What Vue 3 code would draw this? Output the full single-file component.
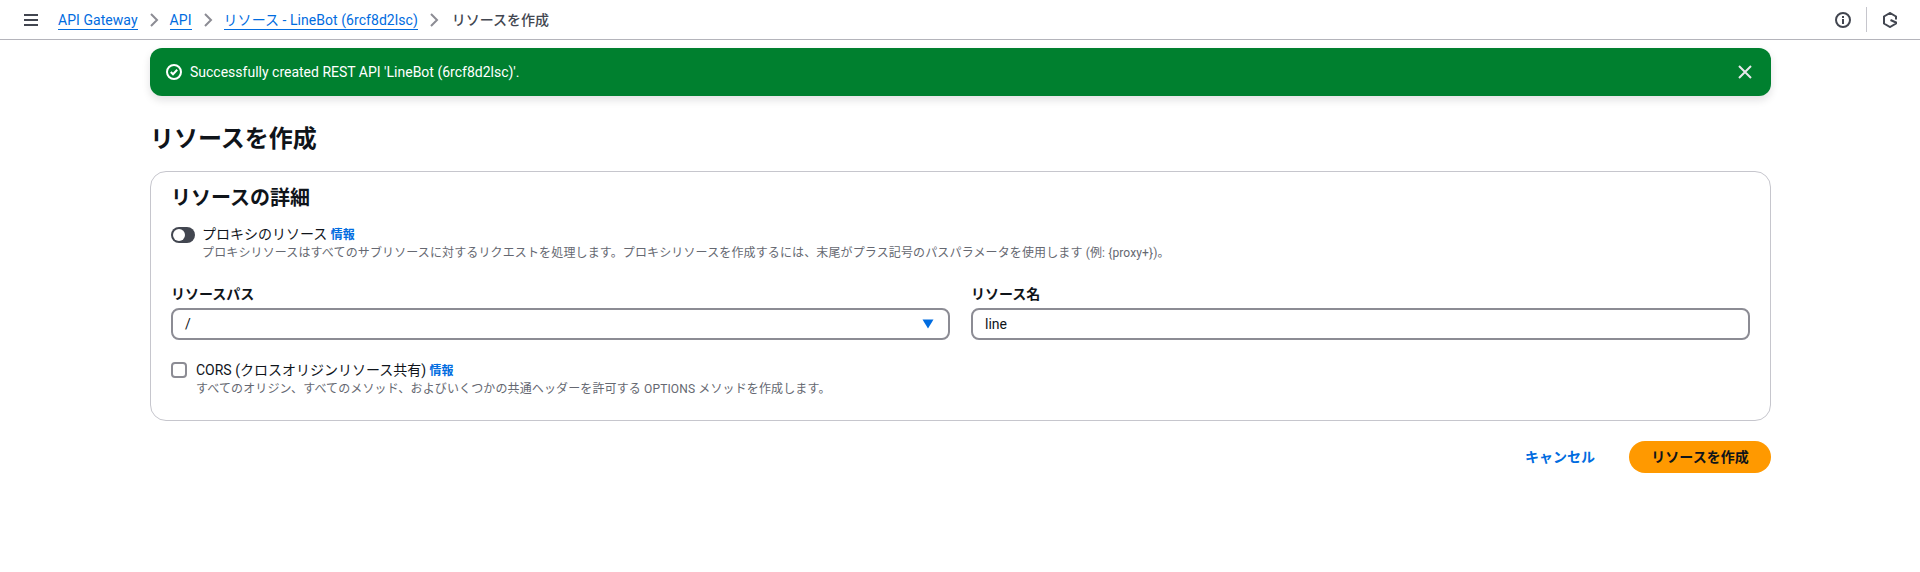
<script setup>
const crumbs = [
  { text: 'API Gateway' },
  { text: 'API' },
  { text: 'リソース - LineBot (6rcf8d2lsc)' },
]
</script>

<template>
  <div class="page">
    <header class="nav">
      <svg class="burger" width="16" height="16" viewBox="0 0 16 16" fill="none" stroke="#424650" stroke-width="2"><path d="M1 3h14M1 8h14M1 13h14" /></svg>
      <nav class="crumbs">
        <template v-for="c in crumbs" :key="c.text">
          <a class="crumb">{{ c.text }}</a>
          <svg class="chev" width="16" height="16" viewBox="0 0 16 16" fill="none" stroke="#8c8c94" stroke-width="2"><path d="M5 2l6 6-6 6" /></svg>
        </template>
        <span class="current">リソースを作成</span>
      </nav>
      <div class="nav-tools">
        <svg width="16" height="16" viewBox="0 0 16 16" fill="none" stroke="#424650" stroke-width="2"><circle cx="8" cy="8" r="7" /><path d="M8 7v5M8 4v2" /></svg>
        <span class="nav-div"></span>
        <svg width="16" height="16" viewBox="0 0 16 16" fill="none" stroke="#424650" stroke-width="2"><path d="M14 7.5V4.5L8 1 2 4.5v7L8 15l6-3.5V10.5L8.5 8" /></svg>
      </div>
    </header>

    <main class="main">
      <div class="flash">
        <svg width="16" height="16" viewBox="0 0 16 16" fill="none" stroke="#fff" stroke-width="2"><circle cx="8" cy="8" r="7" /><path d="M4.8 8l2.2 2.2 4.2-4.4" /></svg>
        <span class="flash-text">Successfully created REST API 'LineBot (6rcf8d2lsc)'.</span>
        <svg class="close" width="16" height="16" viewBox="0 0 16 16" fill="none" stroke="#e8e8ec" stroke-width="2"><path d="M2 2l12 12M14 2L2 14" /></svg>
      </div>

      <h1 class="title">リソースを作成</h1>

      <section class="card">
        <h2 class="card-title">リソースの詳細</h2>

        <div class="option proxy">
          <span class="toggle"><span class="knob"></span></span>
          <div>
            <div class="opt-label">プロキシのリソース <a class="info">情報</a></div>
            <div class="opt-desc">プロキシリソースはすべてのサブリソースに対するリクエストを処理します。プロキシリソースを作成するには、末尾がプラス記号のパスパラメータを使用します (例: {proxy+})。</div>
          </div>
        </div>

        <div class="fields">
          <div class="field">
            <label class="field-label">リソースパス</label>
            <div class="input select">
              <span>/</span>
              <svg width="12" height="10" viewBox="0 0 12 10" fill="#006ce0"><path d="M0.5 0.5h11L6 9.5z" /></svg>
            </div>
          </div>
          <div class="field">
            <label class="field-label">リソース名</label>
            <div class="input"><span>line</span></div>
          </div>
        </div>

        <div class="option cors">
          <span class="checkbox"></span>
          <div>
            <div class="opt-label">CORS (クロスオリジンリソース共有) <a class="info">情報</a></div>
            <div class="opt-desc">すべてのオリジン、すべてのメソッド、およびいくつかの共通ヘッダーを許可する OPTIONS メソッドを作成します。</div>
          </div>
        </div>
      </section>

      <div class="actions">
        <a class="cancel">キャンセル</a>
        <button class="primary">リソースを作成</button>
      </div>
    </main>
  </div>
</template>

<style>
html, body { margin: 0; background: #fff; }
</style>

<style scoped>
.page {
  height: 572px;
  overflow: hidden;
  background: #fff;
  color: #0f141a;
  font-family: Roboto, "Noto Sans CJK JP", sans-serif;
  font-size: 14px;
  line-height: 20px;
}
.nav {
  height: 39px;
  border-bottom: 1px solid #b4b4bb;
  display: flex;
  align-items: center;
  padding: 0 22px 0 23px;
}
.burger { margin-right: 19px; }
.crumbs { display: flex; align-items: center; }
.crumb {
  color: #006ce0;
  border-bottom: 1px solid #006ce0;
  line-height: 18px;
  margin-top: 2px;
  letter-spacing: 0.05px;
}
.chev { margin: 0 8px; }
.current { color: #424650; font-weight: 500; margin-left: 2px; }
.nav-tools { margin-left: auto; display: flex; align-items: center; }
.nav-div { width: 1px; height: 25px; background: #c6c6cd; margin: 0 15px 0 15px; }
.main { padding: 8px 149px 0 150px; }
.flash {
  height: 48px;
  background: #00802f;
  border-radius: 12px;
  color: #fff;
  display: flex;
  align-items: center;
  padding: 0 18px 0 16px;
  box-shadow: 0 4px 8px rgba(15, 20, 26, 0.12);
}
.flash-text { margin-left: 8px; }
.close { margin-left: auto; }
.title {
  margin: 28px 0 17px;
  font-size: 24px;
  line-height: 30px;
  font-weight: 700;
}
.card {
  box-sizing: border-box;
  height: 250px;
  border: 1px solid #c6c6cd;
  border-radius: 16px;
  padding: 13px 20px 0;
}
.card-title {
  margin: 0;
  font-size: 20px;
  line-height: 26px;
  font-weight: 700;
}
.option { display: flex; }
.proxy { margin-top: 14px; }
.toggle {
  box-sizing: border-box;
  width: 24px;
  height: 16px;
  margin: 2px 7px 0 0;
  padding: 2px;
  border-radius: 8px;
  background: #424650;
  flex: none;
  display: flex;
}
.knob { width: 12px; height: 12px; border-radius: 50%; background: #fff; }
.opt-label { line-height: 18px; }
.opt-desc { font-size: 12px; line-height: 18px; color: #656871; letter-spacing: 0.13px; }
.info { color: #006ce0; font-size: 12px; font-weight: 700; }
.fields {
  display: grid;
  grid-template-columns: 779px 779px;
  column-gap: 21px;
  margin-top: 22px;
}
.field-label { display: block; font-weight: 700; line-height: 20px; margin-bottom: 4px; }
.input {
  box-sizing: border-box;
  height: 32px;
  border: 2px solid #8c8c94;
  border-radius: 8px;
  padding: 0 12px;
  display: flex;
  align-items: center;
  justify-content: space-between;
}
.select { padding-right: 14px; }
.cors { margin-top: 21px; }
.checkbox {
  box-sizing: border-box;
  width: 16px;
  height: 16px;
  margin: 1px 9px 0 0;
  border: 2px solid #8c8c94;
  border-radius: 4px;
  flex: none;
}
.actions {
  display: flex;
  justify-content: flex-end;
  align-items: center;
  margin-top: 20px;
}
.cancel { color: #006ce0; font-weight: 700; margin-right: 34px; }
.primary {
  box-sizing: border-box;
  height: 32px;
  width: 142px;
  border: 0;
  border-radius: 16px;
  background: #ff9900;
  color: #0f141a;
  font: inherit;
  font-weight: 700;
  padding: 0;
}
</style>
